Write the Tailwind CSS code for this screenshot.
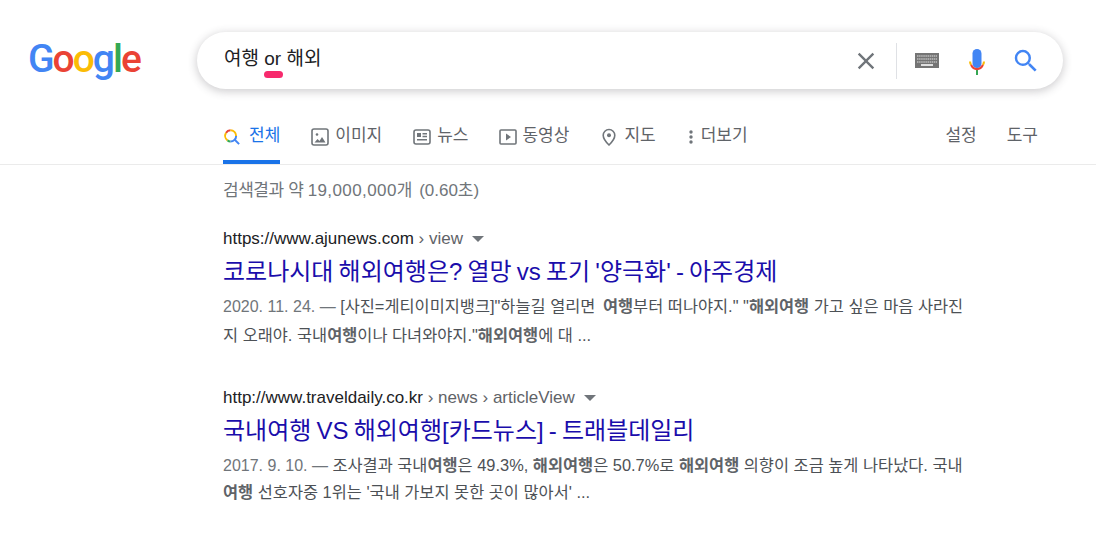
<!DOCTYPE html>
<html lang="ko">
<head>
  <meta charset="UTF-8">
  <title>여행 or 해외 - Google 검색</title>
  <script src="https://cdn.jsdelivr.net/npm/@tailwindcss/browser@4"></script>
</head>
<body class="bg-white h-[538px] overflow-hidden font-['Liberation_Sans','Noto_Sans_CJK_KR',sans-serif]">
  <!-- header -->
  <div class="flex items-center h-[57px] mt-8">
    <div class="w-[197px] pl-[28px] shrink-0 text-[39px] leading-none tracking-[-2px] font-['Roboto',sans-serif] font-medium -mt-[2px]">
      <span class="text-[#4285f4]">G</span><span class="text-[#ea4335]">o</span><span class="text-[#fbbc05]">o</span><span class="text-[#4285f4]">g</span><span class="text-[#34a853]">l</span><span class="text-[#ea4335]">e</span>
    </div>
    <div class="w-[866px] h-[57px] rounded-full bg-white shadow-[0_2px_8px_1px_rgba(64,60,67,0.24)] flex items-center pl-[27px] pr-[22px]">
      <div class="flex-1 text-[19px] text-[#202124] -mt-[2px]">
        여행 <span class="relative">or<span class="absolute left-0 -right-[2px] top-[23px] h-[7px] rounded-full bg-[#f72a6d]"></span></span> 해외
      </div>
      <svg class="w-[28px] h-[28px] text-[#70757a]" viewBox="0 0 24 24" fill="currentColor"><path d="M19 6.410 17.590 5 12 10.590 6.410 5 5 6.410 10.590 12 5 17.590 6.410 19 12 13.410 17.590 19 19 17.590 13.410 12z"/></svg>
      <div class="w-px h-9 bg-[#dfe1e5] ml-[16px] mr-[18px]"></div>
      <svg class="w-6 h-[15px]" viewBox="0 0 24 15"><rect width="24" height="15" fill="#757575"/><path d="M2 3h20M2 6h20M2 9h20" stroke="#bdbdbd" stroke-width="1.600" stroke-dasharray="1.500 .6"/><rect x="6" y="11" width="12" height="2" fill="#e0e0e0"/></svg>
      <svg class="w-[30px] h-[30px] ml-[23px]" viewBox="0 0 30 30"><rect x="10.500" y="3" width="9" height="19" rx="4.500" fill="#4285f4"/><path d="M14 24h2v5h-2z" fill="#34a853"/><path d="M7 15.500c0 1.500.4 2.800 1.200 4l1.700-1.300c-.5-.8-.8-1.700-.8-2.700z" fill="#fbbc05"/><path d="M23 15.500c0 1.500-.4 2.800-1.200 4l-1.700-1.300c.5-.8.800-1.700.800-2.700z" fill="#fbbc05"/><path d="M8.200 19.500c1.400 2.800 3.800 4.700 6.800 4.700s5.400-1.900 6.800-4.700l-1.700-1.300c-1 2.100-2.900 3.700-5.100 3.700s-4.100-1.600-5.100-3.700z" fill="#ea4335"/></svg>
      <svg class="w-[30px] h-[30px] ml-[19px]" viewBox="0 0 24 24" fill="#4285f4"><path d="M15.500 14h-.79l-.28-.27A6.471 6.471 0 0 0 16 9.500 6.500 6.500 0 1 0 9.500 16c1.610 0 3.090-.59 4.230-1.570l.27.28v.79l5 4.990L20.490 19l-4.990-5zm-6 0C7.010 14 5 11.990 5 9.500S7.010 5 9.500 5 14 7.010 14 9.500 11.990 14 9.500 14z"/></svg>
    </div>
  </div>

  <!-- tabs -->
  <div class="mt-[20px] h-[56px] border-b border-[#ebebeb] pl-[223px] pr-[58px] flex text-[17px] text-[#5f6368]">
    <div class="flex items-center gap-[8px] h-[55px] pt-[2px] border-b-4 border-[#1a73e8] text-[#1a73e8] mr-[31px]">
      <svg class="w-[18px] h-[18px] mt-[2px]" viewBox="0 0 24 24" fill="none" stroke-width="2.600"><path stroke="#4285f4" d="M15 15l6.500 6.500"/><path stroke="#ea4335" d="M4 6.500A7.500 7.500 0 0 1 10 3"/><path stroke="#fbbc05" d="M10 3a7.500 7.500 0 0 1 7.500 7.500"/><path stroke="#fbbc05" d="M4 6.500a7.500 7.500 0 0 0 2 10"/><path stroke="#34a853" d="M6 16.500a7.500 7.500 0 0 0 4 1.500"/><path stroke="#4285f4" d="M10 18a7.500 7.500 0 0 0 7.500-7.500"/></svg>
      <span>전체</span>
    </div>
    <div class="flex items-center gap-[6px] h-[55px] pt-[2px] border-b-4 border-transparent mr-[31px]">
      <svg class="w-[18px] h-[18px] mt-[2px]" viewBox="0 0 18 18" fill="none"><rect x="1" y="1" width="16" height="16" rx="2" stroke="#70757a" stroke-width="1.600"/><circle cx="6" cy="6.500" r="1.300" fill="#70757a"/><path d="M3.500 14.500l3-3.500 2 2 2.500-4 3.500 5.500z" fill="#70757a"/></svg>
      <span>이미지</span>
    </div>
    <div class="flex items-center gap-[6px] h-[55px] pt-[2px] border-b-4 border-transparent mr-[31px]">
      <svg class="w-[18px] h-[18px] mt-[2px]" viewBox="0 0 18 18" fill="none"><rect x="1" y="2" width="16" height="14" rx="2" stroke="#70757a" stroke-width="1.600"/><path d="M4 5h4v4H4zM9.500 5H14v1.500H9.500zM9.500 7.700H14v1.500H9.500zM4 11h10v1.600H4z" fill="#70757a"/></svg>
      <span>뉴스</span>
    </div>
    <div class="flex items-center gap-[5px] h-[55px] pt-[2px] border-b-4 border-transparent mr-[31px]">
      <svg class="w-[18px] h-[18px] mt-[2px]" viewBox="0 0 18 18" fill="none"><rect x="1" y="2" width="16" height="14" rx="1" stroke="#70757a" stroke-width="1.600"/><path d="M7 5.500v7l5-3.500z" fill="#70757a"/></svg>
      <span>동영상</span>
    </div>
    <div class="flex items-center gap-[6px] h-[55px] pt-[2px] border-b-4 border-transparent mr-[32px]">
      <svg class="w-[18px] h-[18px] mt-[2px]" viewBox="0 0 18 18" fill="none"><path d="M9 1.500a5.800 5.800 0 0 0-5.800 5.800C3.200 11.500 9 17 9 17s5.800-5.500 5.800-9.700A5.800 5.800 0 0 0 9 1.500z" stroke="#70757a" stroke-width="1.600"/><circle cx="9" cy="7.300" r="2" fill="#70757a"/></svg>
      <span>지도</span>
    </div>
    <div class="flex items-center gap-[7px] h-[55px] pt-[2px] border-b-4 border-transparent">
      <svg class="w-[6px] h-[18px] mt-[2px]" viewBox="0 0 6 18" fill="#70757a"><circle cx="3" cy="4" r="1.700"/><circle cx="3" cy="9" r="1.700"/><circle cx="3" cy="14" r="1.700"/></svg>
      <span>더보기</span>
    </div>
    <div class="ml-auto flex items-center gap-[30px] h-[55px] pb-[2px]">
      <span>설정</span>
      <span>도구</span>
    </div>
  </div>

  <!-- results -->
  <div class="pl-[223px] w-[1000px]">
    <div class="text-[17px] leading-[20px] text-[#70757a] mt-[16px]"><span class="tracking-[-0.5px]">검색결과</span> 약 <span class="-ml-[1px] tracking-[0.4px]">19,000,000</span>개 <span class="ml-[2px]">(0.60초)</span></div>

    <div class="mt-[28px]">
      <div class="flex items-center text-[17px] leading-[20px] text-[#202124]">https://www.ajunews.com<span class="text-[#5f6368]">&nbsp;› view</span><span class="ml-[9px] border-x-[6px] border-t-[6px] border-x-transparent border-t-[#70757a]"></span></div>
      <div class="text-[24px] leading-[30px] [word-spacing:-1.5px] text-[#1a0dab] mt-[8px]">코로나시대 해외여행은? 열망 vs 포기 '양극화' - 아주경제</div>
      <div class="text-[16.4px] leading-[28px] text-[#4d5156] [&_b]:text-[#5f6368] mt-[5px]"><span class="text-[16px] text-[#70757a]">2020. 11. 24. — </span>[사진=게티이미지뱅크]"하늘길 열리면 <b class="ml-[3px]">여행</b>부터 떠나야지." "<b>해외여행</b> 가고 싶은 마음 사라진<br>지 오래야. 국내<b>여행</b>이나 다녀와야지."<b>해외여행</b>에 대 ...</div>
    </div>

    <div class="mt-[39px]">
      <div class="flex items-center text-[17px] leading-[20px] text-[#202124]">http://www.traveldaily.co.kr<span class="text-[#5f6368]">&nbsp;› news › articleView</span><span class="ml-[9px] border-x-[6px] border-t-[6px] border-x-transparent border-t-[#70757a]"></span></div>
      <div class="text-[24px] leading-[30px] [word-spacing:-1.5px] text-[#1a0dab] mt-[8px]">국내여행 VS 해외여행[카드뉴스] - 트래블데일리</div>
      <div class="text-[16.4px] leading-[27px] text-[#4d5156] [&_b]:text-[#5f6368] mt-[6px]"><span class="text-[16px] text-[#70757a]">2017. 9. 10. — </span>조사결과 국내<b>여행</b>은 49.3%, <b>해외여행</b>은 50.7%로 <b>해외여행</b> 의향이 조금 높게 나타났다. 국내<br><b>여행</b> 선호자중 1위는 '국내 가보지 못한 곳이 많아서' ...</div>
    </div>
  </div>
</body>
</html>
